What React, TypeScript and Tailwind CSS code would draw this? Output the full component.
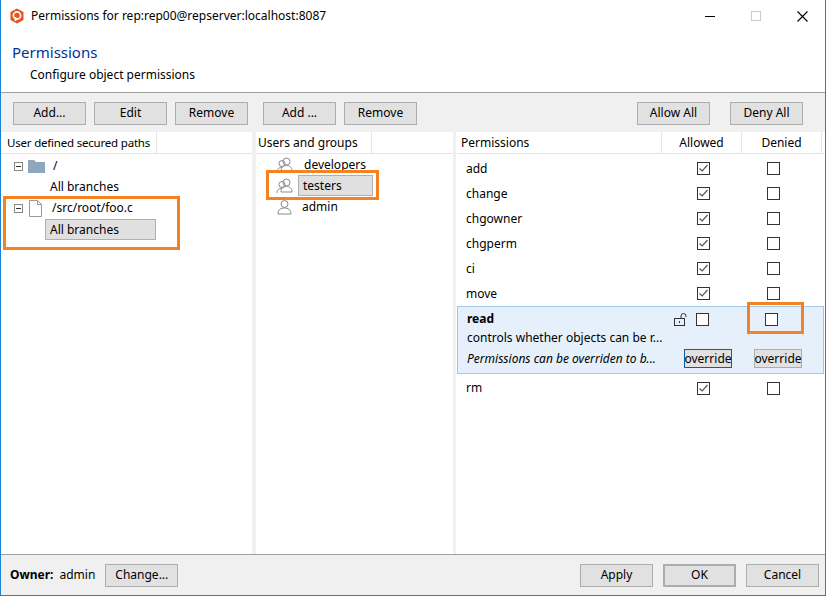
import React from "react";

const F = { fontFamily: '"Noto Sans", "Open Sans", sans-serif' };

function Btn({ children, w, cls = "" }: { children: React.ReactNode; w: string; cls?: string }) {
  return (
    <div className={`h-[23px] ${w} flex items-center justify-center border border-[#adadad] bg-[#e1e1e1] text-[12px] text-black ${cls}`}>{children}</div>
  );
}

function Check({ on }: { on?: boolean }) {
  return (
    <div className="w-[13px] h-[13px] border border-[#333] bg-white flex items-center justify-center">
      {on && (
        <svg width="11" height="11" viewBox="0 0 11 11"><path d="M1.5 5.5 L4.2 8 L9.5 2" stroke="#555" strokeWidth="1.2" fill="none" /></svg>
      )}
    </div>
  );
}

function User() {
  return (
    <svg width="16" height="16" viewBox="0 0 16 16" fill="none" stroke="#8a8a8a" strokeWidth="1">
      <circle cx="8.5" cy="5" r="3.5" />
      <path d="M2 15 C2 10.5 5 9 8.5 9 C12 9 15 10.5 15 15 Z" />
    </svg>
  );
}
function Group() {
  return (
    <svg width="18" height="16" viewBox="0 0 18 16" fill="none" stroke="#8a8a8a" strokeWidth="1">
      <circle cx="10.5" cy="4.5" r="3.5" />
      <path d="M5 14 C5 10 7.5 8.5 10.5 8.5 C13.5 8.5 16 10 16 14 Z" />
      <circle cx="6" cy="6.5" r="3" />
      <path d="M1 15 C1 11.5 3 10.5 6 10.5" />
    </svg>
  );
}
function Minus() {
  return (
    <div className="w-[9px] h-[9px] border border-[#888] bg-white flex items-center justify-center">
      <div className="w-[5px] h-px bg-[#333]" />
    </div>
  );
}

const perms = ["add", "change", "chgowner", "chgperm", "ci", "move"];

export default function App() {
  return (
    <div style={F} className="w-[826px] h-[596px] flex flex-col border border-[#1883d7] border-t-0 bg-white text-[12px] text-black overflow-hidden">
      <div className="h-[32px] flex items-center pl-[8px] bg-white">
        <svg width="16" height="16" viewBox="0 0 16 16">
          <path d="M8 0.5 L14.5 4 V12 L8 15.5 L1.5 12 V4 Z" fill="#e8541f" />
          <circle cx="8" cy="7.5" r="3.6" fill="none" stroke="white" strokeWidth="1.6" />
          <path d="M6.5 9 V13" stroke="white" strokeWidth="1.6" />
        </svg>
        <span className="ml-[6px] text-[12px]">Permissions for rep:rep00@repserver:localhost:8087</span>
        <div className="ml-auto flex items-center">
          <div className="w-[46px] flex justify-center"><div className="w-[10px] h-px bg-black" /></div>
          <div className="w-[46px] flex justify-center"><div className="w-[10px] h-[10px] border border-[#ccc]" /></div>
          <div className="w-[46px] flex justify-center">
            <svg width="11" height="11" viewBox="0 0 11 11"><path d="M0.5 0.5 L10.5 10.5 M10.5 0.5 L0.5 10.5" stroke="#000" strokeWidth="1.1" /></svg>
          </div>
        </div>
      </div>
      <div className="h-[61px] pl-[11px] pt-[10px] border-b border-[#a0a0a0]">
        <div className="text-[15px] text-[#003399] leading-[20px]">Permissions</div>
        <div className="pl-[18px] mt-[5px] leading-[16px]">Configure object permissions</div>
      </div>
      <div className="flex flex-1 bg-[#f0f0f0] pt-[1px]">
        {/* left */}
        <div className="w-[251px] flex flex-col">
          <div className="h-[38px] flex items-center gap-[8px] pl-[12px]">
            <Btn w="w-[73px]">Add...</Btn><Btn w="w-[73px]">Edit</Btn><Btn w="w-[73px]">Remove</Btn>
          </div>
          <div className="flex-1 bg-white flex flex-col">
            <div className="h-[22px] flex border-b border-[#e5e5e5] bg-white">
              <div className="w-[156px] pl-[6px] flex items-center border-r border-[#e5e5e5] whitespace-nowrap text-[11.5px] tracking-[-0.2px]">User defined secured paths</div>
            </div>
            <div className="relative">
              <div className="flex items-center h-[22px] pl-[13px] mt-[1px]">
                <Minus />
                <svg className="ml-[5px]" width="17" height="14" viewBox="0 0 17 14"><path d="M0 1 H6 L8 3 H17 V14 H0 Z" fill="#8fa6bf" /></svg>
                <span className="ml-[8px]">/</span>
              </div>
              <div className="h-[20px] pl-[49px] flex items-center">All branches</div>
              <div className="absolute left-[2px] top-[42px] w-[177px] h-[54px] border-[3px] border-[#f58220]" />
              <div className="flex items-center h-[22px] pl-[13px]">
                <Minus />
                <svg className="ml-[6px]" width="13" height="17" viewBox="0 0 13 17"><path d="M0.5 0.5 H8.5 L12.5 4.5 V16.5 H0.5 Z M8.5 0.5 V4.5 H12.5" fill="white" stroke="#999" /></svg>
                <span className="ml-[10px]">/src/root/foo.c</span>
              </div>
              <div className="ml-[44px] w-[111px] h-[21px] bg-[#e0e0e0] border border-[#b0b0b0] pl-[4px] flex items-center">All branches</div>
            </div>
          </div>
        </div>
        <div className="w-[4px]" />
        {/* middle */}
        <div className="w-[197px] flex flex-col">
          <div className="h-[38px] flex items-center gap-[8px] pl-[7px]">
            <Btn w="w-[73px]">Add ...</Btn><Btn w="w-[73px]">Remove</Btn>
          </div>
          <div className="flex-1 bg-white">
            <div className="h-[22px] flex border-b border-[#e5e5e5]">
              <div className="w-[116px] pl-[2px] flex items-center border-r border-[#e5e5e5]">Users and groups</div>
            </div>
            <div className="relative pl-[20px]">
              <div className="h-[21px] flex items-center"><Group /><span className="ml-[10px]">developers</span></div>
              <div className="absolute left-[10px] top-[16px] w-[113px] h-[30px] border-[3px] border-[#f58220]" />
              <div className="h-[21px] flex items-center"><Group /><div className="ml-[4px] w-[75px] h-[21px] bg-[#e0e0e0] border border-[#b0b0b0] pl-[4px] flex items-center">testers</div></div>
              <div className="h-[21px] flex items-center"><User /><span className="ml-[10px]">admin</span></div>
            </div>
          </div>
        </div>
        <div className="w-[3px]" />
        {/* right */}
        <div className="flex-1 flex flex-col">
          <div className="h-[38px] flex items-center justify-end gap-[20px] pr-[22px]">
            <Btn w="w-[73px]">Allow All</Btn><Btn w="w-[73px]">Deny All</Btn>
          </div>
          <div className="flex-1 bg-white">
            <div className="h-[22px] flex border-b border-[#e5e5e5] mx-[1px]">
              <div className="w-[205px] pl-[4px] flex items-center border-r border-[#e5e5e5]">Permissions</div>
              <div className="w-[80px] flex items-center justify-center border-r border-[#e5e5e5]">Allowed</div>
              <div className="w-[80px] flex items-center justify-center border-r border-[#e5e5e5]">Denied</div>
            </div>
            <div className="pt-[2px]">
              {perms.map((p) => (
                <div key={p} className="h-[25px] flex items-center">
                  <div className="w-[212px] pl-[10px]">{p}</div>
                  <div className="w-[70px] flex justify-center"><Check on /></div>
                  <div className="w-[70px] flex justify-center"><Check /></div>
                </div>
              ))}
              <div className="relative h-[68px] bg-[#e5f0fb] border border-[#9fc8ea] mx-[1px] pl-[9px] pt-[4px]">
                <div className="flex items-center h-[16px]">
                  <span className="w-[206px] font-bold">read</span>
                  <svg width="14" height="14" viewBox="0 0 14 14" fill="none" stroke="#333"><rect x="1.5" y="6.5" width="10" height="7" /><path d="M8 6.5 V4 A2.5 2.5 0 0 1 13 4 V5" /><path d="M6.5 9 V11" /></svg>
                  <div className="ml-[9px]"><Check /></div>
                  <div className="ml-[56px]"><Check /></div>
                </div>
                <div className="mt-[3px] leading-[16px]">controls whether objects can be r...</div>
                <div className="flex items-center mt-[3px]">
                  <span className="w-[217px] italic">Permissions can be overriden to b...</span>
                  <div className="h-[19px] w-[48px] border border-[#0b5ea8] bg-[#e1e1e1] flex items-center justify-center">override</div>
                  <div className="ml-[22px] h-[19px] w-[48px] border border-[#adadad] bg-[#e1e1e1] flex items-center justify-center">override</div>
                </div>
                <div className="absolute left-[289px] top-[-5px] w-[57px] h-[32px] border-[3px] border-[#f58220]" />
              </div>
              <div className="h-[28px] flex items-center">
                <div className="w-[212px] pl-[10px]">rm</div>
                <div className="w-[70px] flex justify-center"><Check on /></div>
                <div className="w-[70px] flex justify-center"><Check /></div>
              </div>
            </div>
          </div>
        </div>
      </div>
      <div className="h-[41px] bg-[#f0f0f0] border-t border-[#a0a0a0] flex items-center pl-[9px] pr-[6px]">
        <span className="font-bold">Owner:</span>
        <span className="ml-[6px]">admin</span>
        <Btn w="w-[73px]" cls="ml-[10px]">Change...</Btn>
        <div className="ml-auto flex gap-[10px]">
          <Btn w="w-[73px]">Apply</Btn>
          <Btn w="w-[73px]" cls="border-2 border-[#0078d7]">OK</Btn>
          <Btn w="w-[73px]">Cancel</Btn>
        </div>
      </div>
    </div>
  );
}
